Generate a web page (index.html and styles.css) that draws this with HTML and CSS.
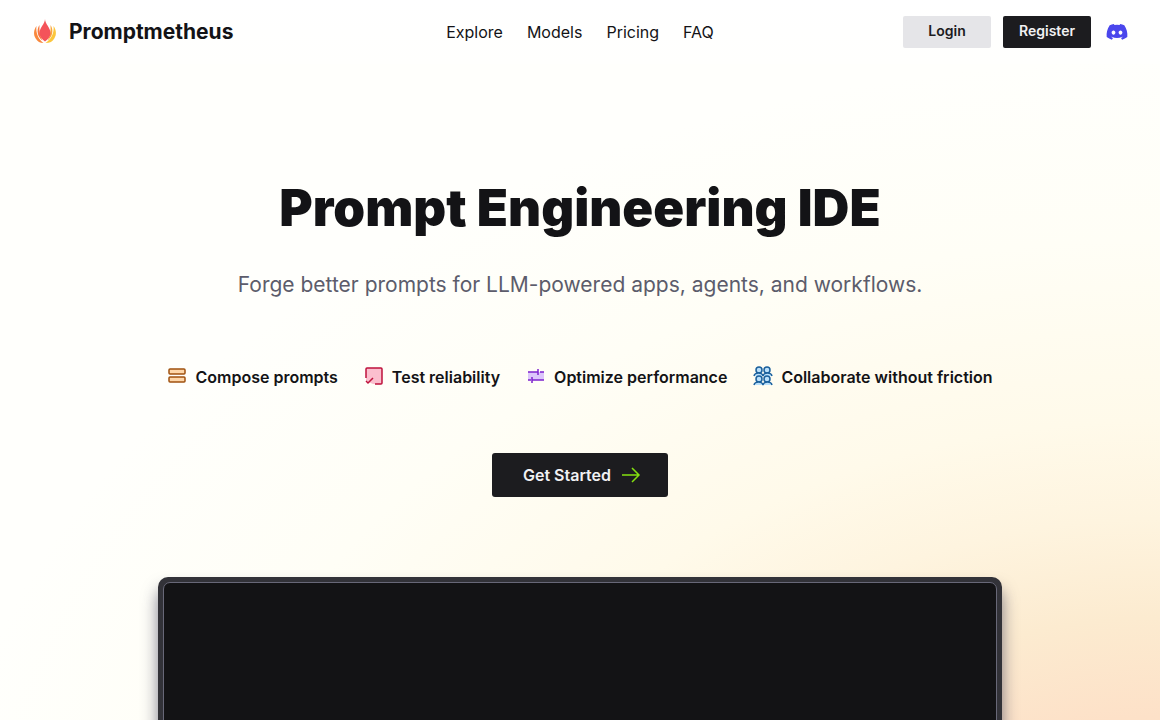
FILE: index.html
```
<!DOCTYPE html>
<html lang="en">
<head>
    <meta charset="utf-8">
    <meta name="viewport" content="width=device-width, initial-scale=1">
    <title>Promptmetheus</title>
    <link rel="stylesheet" href="styles.css">
</head>
<body>
    <header class="header">
        <a class="brand" href="#">
            <svg class="brand-icon" viewBox="0 0 24 26" aria-hidden="true">
                <path fill="#f9883c" d="M4 7C1 11 .8 16 3.200 19.500C5 22.500 7.500 24 11 24C6 20.500 3 14 4 7Z"/>
                <path fill="#fbc63c" d="M21 7C24 11 24.200 16 21.800 19.500C20 22.500 17.500 24 13 24C18.500 20.500 22 14 21 7Z"/>
                <path fill="#f9783f" d="M7 6C3.500 11 5 18 10 21.500C7.500 17 6.500 12 7 6Z"/>
                <path fill="#f9a63c" d="M18 6C21.500 11 20 18 15 21.500C17.500 17 18.500 12 18 6Z"/>
                <path fill="#f4535a" d="M12.500 0C12.500 5 7 8.500 7 14C7 17.500 9.500 20.500 12.500 22.500C15.500 20.500 18 17.500 18 14C18 8.500 12.500 5 12.500 0Z"/>
            </svg>
            <span>Promptmetheus</span>
        </a>
        <nav class="nav">
            <a href="#">Explore</a>
            <a href="#">Models</a>
            <a href="#">Pricing</a>
            <a href="#">FAQ</a>
        </nav>
        <div class="account">
            <button class="button button-light" type="button">Login</button>
            <button class="button button-dark" type="button">Register</button>
            <a class="discord" href="#" aria-label="Discord">
                <svg viewBox="1 1 22 22" aria-hidden="true">
                    <path fill="#4a46ec" d="M19.300 5.300A17 17 0 0 0 15.100 4l-.5 1.100a15 15 0 0 0-5.200 0L8.900 4a17 17 0 0 0-4.200 1.300C2 9.300 1.300 13.200 1.700 17.100a17 17 0 0 0 5.200 2.700l1.100-1.900-1.700-.8.400-.3a12 12 0 0 0 10.600 0l.4.300-1.700.8 1.100 1.900a17 17 0 0 0 5.200-2.700c.5-4.500-.7-8.400-3-11.800ZM8.500 14.700c-1 0-1.900-1-1.900-2.100s.8-2.100 1.900-2.100 1.900 1 1.900 2.100-.8 2.100-1.900 2.100Zm7 0c-1 0-1.900-1-1.900-2.100s.8-2.100 1.900-2.100 1.900 1 1.900 2.100-.8 2.100-1.900 2.100Z"/>
                </svg>
            </a>
        </div>
    </header>

    <main class="hero">
        <h1 class="title">Prompt Engineering IDE</h1>
        <p class="subtitle">Forge better prompts for LLM-powered apps, agents, and workflows.</p>
        <ul class="features">
            <li class="feature feature-orange">
                <svg viewBox="0 0 20 20" aria-hidden="true">
                    <rect x="2" y="3" width="16" height="5" rx="1"/>
                    <rect x="2" y="11" width="16" height="5" rx="1"/>
                </svg>
                Compose prompts
            </li>
            <li class="feature feature-red">
                <svg viewBox="0 0 20 20" aria-hidden="true">
                    <path stroke="none" d="M2 2H18V18H9L2 15Z"/>
                    <path fill="none" d="M2 12V3Q2 2 3 2H17Q18 2 18 3V17Q18 18 17 18H11M2 15L4 17L9 12"/>
                </svg>
                Test reliability
            </li>
            <li class="feature feature-purple">
                <svg viewBox="0 0 20 20" aria-hidden="true">
                    <path stroke="none" d="M2 6H18V14H2Z"/>
                    <path fill="none" d="M2 6H12M12 3V9M14 6H18M2 14H5M6 11V17M6 14H18"/>
                </svg>
                Optimize performance
            </li>
            <li class="feature feature-blue">
                <svg viewBox="0 0 20 20" aria-hidden="true">
                    <circle cx="6" cy="4" r="3"/>
                    <circle cx="14" cy="4" r="3"/>
                    <path d="M1 10C2 6 9 6 10 10C11 6 18 6 19 10"/>
                    <circle cx="6" cy="13" r="3"/>
                    <circle cx="14" cy="13" r="3"/>
                    <path d="M1 19C2 15 9 15 10 19C11 15 18 15 19 19"/>
                </svg>
                Collaborate without friction
            </li>
        </ul>
        <button class="button button-dark start" type="button">
            Get Started
            <svg viewBox="0 0 20 20" width="20" height="20" aria-hidden="true">
                <path d="M1 10H18M11 3L18 10L11 17"/>
            </svg>
        </button>
        <div class="preview">
            <div class="screen"></div>
        </div>
    </main>
</body>
</html>
```

FILE: styles.css
```
* {
    box-sizing: border-box;
}
body {
    margin: 0;
    min-height: 100vh;
    overflow-x: hidden;
    background: radial-gradient(ellipse 105% 820px at 100% 880px, #fdd9c2 0%, #fde1c8 20%, #fcebd0 32%, #fef4df 44%, #fffaea 56%, #fffef6 78%, #fffffc 100%);
    color: #131316;
    font-family: Inter, "Liberation Sans", sans-serif;
    font-size: 16px;
    line-height: 24px;
}
a {
    color: inherit;
    text-decoration: none;
}
svg {
    display: block;
    flex: none;
}
.header {
    display: grid;
    grid-template-columns: 1fr auto 1fr;
    align-items: center;
    height: 64px;
    padding: 0 32px;
    background: linear-gradient(#fff, #fffffd);
}
.brand {
    display: flex;
    align-items: center;
    gap: 12px;
    font-size: 21px;
    font-weight: 700;
}
.brand-icon {
    width: 25px;
    height: 26px;
}
.nav {
    display: flex;
    gap: 24px;
}
.account {
    display: flex;
    align-items: center;
    justify-content: flex-end;
    gap: 12px;
}
.button {
    width: 88px;
    height: 32px;
    padding: 0 0 2px;
    border: 0;
    border-radius: 2px;
    font: inherit;
    font-size: 14px;
    font-weight: 600;
    cursor: pointer;
}
.button-light {
    background: #e5e5e8;
    color: #1c1c1f;
}
.button-dark {
    background: #1c1c1f;
    color: #f1f1f3;
}
.discord {
    padding-left: 3px;
}
.discord svg {
    width: 22px;
    height: 22px;
}
.hero {
    display: flex;
    flex-direction: column;
    align-items: center;
    padding: 112px 32px 0;
}
.title {
    margin: 0;
    font-size: 51px;
    font-weight: 900;
    line-height: 64px;
}
.subtitle {
    margin: 29px 0 0;
    color: #5c5c6b;
    font-size: 21px;
    line-height: 32px;
}
.features {
    display: flex;
    flex-wrap: wrap;
    justify-content: center;
    gap: 16px 26px;
    margin: 64px 0 0;
    padding: 0;
    list-style: none;
}
.feature {
    display: flex;
    align-items: center;
    gap: 8px;
    font-weight: 600;
}
.feature svg {
    width: 20px;
    height: 22px;
    padding-bottom: 2px;
    stroke-width: 1.500;
}
.feature-orange svg {
    fill: #fed7aa;
    stroke: #a0520f;
}
.feature-red svg {
    fill: #fbbfce;
    stroke: #be123c;
}
.feature-purple svg {
    fill: #dcc6fb;
    stroke: #7e22ce;
}
.feature-blue svg {
    fill: #bae0fb;
    stroke: #1b609c;
}
.start {
    display: flex;
    align-items: center;
    justify-content: center;
    gap: 10px;
    width: 176px;
    height: 44px;
    margin-top: 64px;
    padding: 0 0 0 4px;
    border-radius: 3px;
    font-size: 16px;
}
.start svg {
    fill: none;
    stroke: #84e010;
    stroke-width: 1.500;
}
.preview {
    width: 100%;
    max-width: 844px;
    margin-top: 80px;
    padding: 5px;
    border-radius: 10px;
    background: #323238;
    box-shadow: 0 12px 16px #323250a0;
}
.screen {
    aspect-ratio: 16 / 9;
    border: 1px solid #686878;
    border-radius: 7px;
    background: #131315;
}
```
